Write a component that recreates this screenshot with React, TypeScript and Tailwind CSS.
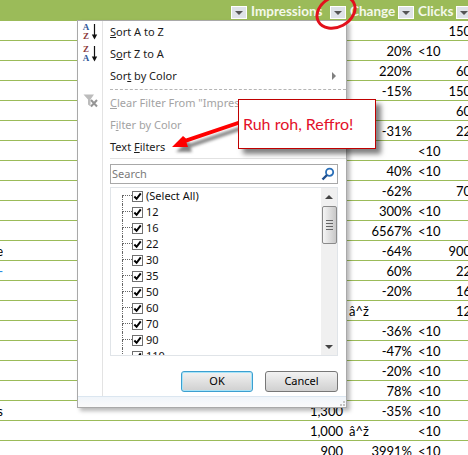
import type { ReactNode } from 'react'

const rows: { label?: string; imp?: string; change?: string; inf?: boolean; clicks?: string; low?: boolean }[] = [
  { clicks: '150' },
  { change: '20%', low: true },
  { change: '220%', clicks: '60' },
  { change: '-15%', clicks: '150' },
  { clicks: '60' },
  { change: '-31%', clicks: '22' },
  { low: true },
  { change: '40%', low: true },
  { change: '-62%', clicks: '70' },
  { change: '300%', low: true },
  { change: '6567%', low: true },
  { label: 'e', change: '-64%', clicks: '900' },
  { label: '-', change: '60%', clicks: '22' },
  { change: '-20%', clicks: '16' },
  { inf: true, clicks: '12' },
  { change: '-36%', low: true },
  { change: '-47%', low: true },
  { change: '-20%', low: true },
  { change: '78%', low: true },
  { label: 's', imp: '1,300', change: '-35%', low: true },
  { imp: '1,000', inf: true, low: true },
  { imp: '900', change: '3991%', low: true },
]

const values = ['(Select All)', '12', '16', '22', '30', '35', '50', '60', '70', '90', '110']

function HeaderButton() {
  return (
    <div className="mt-[4px] flex h-[13px] w-[16px] shrink-0 items-center justify-center border border-white bg-[#dfe3e8]">
      <div className="h-0 w-0 border-x-[4px] border-t-[4px] border-x-transparent border-t-[#555]" />
    </div>
  )
}

function HeaderCell({ width, children }: { width: string; children: ReactNode }) {
  return <div className={`${width} shrink-0 pt-[1px] pl-[4px] text-[13.5px] font-bold text-[#f4f8ea]`}>{children}</div>
}

function MenuItem({ children, disabled, icon }: { children: ReactNode; disabled?: boolean; icon?: ReactNode }) {
  return (
    <div className={`flex h-[22px] items-center justify-between pr-[10px] ${disabled ? 'text-[#a3a3a3]' : 'text-[#1c1c1c]'}`}>
      <span>{children}</span>
      {icon}
    </div>
  )
}

function SortIcon({ top, bottom, topColor, bottomColor }: { top: string; bottom: string; topColor: string; bottomColor: string }) {
  return (
    <div className="flex h-[22px] items-center justify-center gap-[1px]">
      <div className="flex w-[8px] flex-col items-center font-['Liberation_Serif',serif] text-[9px] leading-[9px] font-bold">
        <span className={topColor}>{top}</span>
        <span className={bottomColor}>{bottom}</span>
      </div>
      <svg width="7" height="16" viewBox="0 0 7 16">
        <path d="M3.5 0V12" stroke="#111" strokeWidth="1.2" />
        <path d="M0.8 10.5H6.2L3.5 15.5Z" fill="#111" />
      </svg>
    </div>
  )
}

function ListRow({ value, first }: { value: string; first?: boolean }) {
  return (
    <div className="flex h-[16px] shrink-0 items-center pl-[11px]">
      <div className="flex h-full w-[10px] shrink-0 flex-col">
        <div className={`h-1/2 border-b border-dotted border-[#666] ${first ? '' : 'border-l'}`} />
        <div className="h-1/2 border-l border-dotted border-[#666]" />
      </div>
      <div className="flex h-[11px] w-[11px] shrink-0 items-center justify-center border border-[#707070] bg-white">
        <svg width="9" height="9" viewBox="0 0 10 10">
          <path d="M1.5 5L4 7.6L8.6 1.6" fill="none" stroke="#000" strokeWidth="2.2" />
        </svg>
      </div>
      <span className="pl-[3px] text-[#111]">{value}</span>
    </div>
  )
}

export default function App() {
  return (
    <div className="relative h-[455px] w-[468px] overflow-hidden bg-white font-['Lato',sans-serif] text-[13px] text-black">
      <div className="flex h-[21px] w-[480px] items-center bg-[#9bbb59] pl-[231px]">
        <HeaderButton />
        <HeaderCell width="w-[83px]">Impressions</HeaderCell>
        <HeaderButton />
        <HeaderCell width="w-[52px]">Change</HeaderCell>
        <HeaderButton />
        <HeaderCell width="w-[42px]">Clicks</HeaderCell>
        <HeaderButton />
      </div>

      {rows.map((row, i) => (
        <div key={i} className="box-border flex h-[20px] w-[480px] items-center border-b border-[#9bbb59] pt-[2px] leading-none">
          <div className="flex w-[3px] shrink-0 justify-end overflow-hidden">
            <span className={row.label === '-' ? 'text-[#2b8be0]' : ''}>{row.label}</span>
          </div>
          <div className="w-[340px] shrink-0 text-right">{row.imp}</div>
          <div className={`ml-[6px] w-[63px] shrink-0 ${row.inf ? 'text-left' : 'text-right'}`}>
            {row.inf ? 'â^ž' : row.change}
          </div>
          <div className={`ml-[6px] w-[53px] shrink-0 ${row.low ? 'text-left' : 'text-right'}`}>
            {row.low ? '<10' : row.clicks}
          </div>
        </div>
      ))}

      {/* filter dropdown */}
      <div className="absolute top-[20px] left-[77px] flex h-[388px] w-[270px] flex-col border border-[#a9a9a9] bg-white font-['Noto_Sans',sans-serif] text-[11px] shadow-[3px_3px_4px_rgba(0,0,0,0.28)]">
        <div className="flex min-h-0 flex-1">
          <div className="w-[25px] shrink-0 border-r border-[#e3e3e3]">
            <SortIcon top="A" bottom="Z" topColor="text-[#2f5597]" bottomColor="text-[#8c3a3a]" />
            <SortIcon top="Z" bottom="A" topColor="text-[#8c3a3a]" bottomColor="text-[#2f5597]" />
            <div className="mt-[29px] flex justify-center">
              <svg width="15" height="14" viewBox="0 0 15 14">
                <path d="M0.5 0.5H11L7.5 5.5V12.5L5 10.5V5.5Z" fill="#bcbcbc" />
                <path d="M8 6L14 12.5M14 6L8 12.5" stroke="#959595" strokeWidth="2" />
              </svg>
            </div>
          </div>

          <div className="flex min-w-0 flex-1 flex-col pl-[7px]">
            <MenuItem>
              <u>S</u>ort A to Z
            </MenuItem>
            <MenuItem>
              S<u>o</u>rt Z to A
            </MenuItem>
            <MenuItem icon={<div className="h-0 w-0 border-y-[4px] border-l-[4px] border-y-transparent border-l-[#808080]" />}>
              Sor<u>t</u> by Color
            </MenuItem>
            <div className="my-[2px] h-0 border-t border-dashed border-[#b5b5b5]" />
            <MenuItem disabled>
              <u>C</u>lear Filter From "Impressions"
            </MenuItem>
            <MenuItem disabled>
              F<u>i</u>lter by Color
            </MenuItem>
            <MenuItem>
              Text <u>F</u>ilters
            </MenuItem>
            <div className="h-0 border-t border-[#e2e2e2]" />

            <div className="mt-[5px] mr-[8px] flex h-[20px] shrink-0 items-center justify-between border border-[#a8a8a8] pr-[2px] pl-[1px] text-[#7a7a7a]">
              <span>Search</span>
              <svg width="14" height="14" viewBox="0 0 14 14">
                <circle cx="8.6" cy="5.2" r="3.6" fill="#fff" stroke="#2a6fb8" strokeWidth="1.8" />
                <path d="M6 8L1.5 12.5" stroke="#1f4f8f" strokeWidth="2.4" />
              </svg>
            </div>

            <div className="mt-[3px] mr-[8px] flex h-[169px] shrink-0 overflow-hidden border border-[#e0e4e8]">
              <div className="min-w-0 flex-1">
                {values.map((v, i) => (
                  <ListRow key={v} value={v} first={i === 0} />
                ))}
              </div>
              <div className="flex w-[16px] shrink-0 flex-col items-center bg-[#f0f0f0]">
                <div className="mt-[7px] h-0 w-0 border-x-[4px] border-b-[4px] border-x-transparent border-b-[#444]" />
                <div className="mt-[7px] flex h-[38px] w-[15px] shrink-0 flex-col items-center justify-center gap-[2px] rounded-[2px] border border-[#8a8a8a] bg-gradient-to-r from-[#f5f5f5] to-[#c8c8c8]">
                  <div className="h-px w-[7px] bg-[#666]" />
                  <div className="h-px w-[7px] bg-[#666]" />
                  <div className="h-px w-[7px] bg-[#666]" />
                  <div className="h-px w-[7px] bg-[#666]" />
                </div>
                <div className="mt-auto mb-[6px] h-0 w-0 border-x-[4px] border-t-[4px] border-x-transparent border-t-[#444]" />
              </div>
            </div>

            <div className="mt-[15px] mr-[8px] flex justify-end gap-[12px]">
              <button className="h-[21px] w-[72px] rounded-[3px] border border-[#3c9fd0] bg-gradient-to-b from-[#f2f2f2] to-[#d0d0d0] shadow-[inset_0_0_0_1px_#a8e4f8]">
                OK
              </button>
              <button className="h-[21px] w-[73px] rounded-[3px] border border-[#777] bg-gradient-to-b from-[#f2f2f2] to-[#d0d0d0]">
                Cancel
              </button>
            </div>
          </div>
        </div>

        <div className="flex h-[11px] shrink-0 items-end justify-end border-t border-[#dbe6f0] bg-gradient-to-b from-[#f0f5fa] to-[#fafafa] pr-[1px] pb-[1px]">
          <div className="grid grid-cols-2 gap-[1px]">
            <div className="h-[2px] w-[2px]" />
            <div className="h-[2px] w-[2px] bg-[#c4c4c4]" />
            <div className="h-[2px] w-[2px] bg-[#c4c4c4]" />
            <div className="h-[2px] w-[2px] bg-[#c4c4c4]" />
          </div>
        </div>
      </div>

      {/* annotations on top of the screenshot */}
      <svg className="absolute top-0 left-0 h-[455px] w-[468px]" viewBox="0 0 468 455">
        <g opacity="0.6" transform="translate(4 5)" className="blur-[1.5px]">
          <path d="M238 121L186 138.5L183 136L172 147L188 147L186.5 142.5L238 125Z" fill="#333" />
        </g>
        <path d="M238 121L186 138.5L183 136L172 147L188 147L186.5 142.5L238 125Z" fill="#f00" />
        <ellipse cx="336" cy="12" rx="20" ry="15" transform="rotate(-28 336 12)" fill="none" stroke="#e3101c" strokeWidth="3" />
      </svg>

      <div className="absolute top-[99px] left-[238px] flex h-[50px] w-[138px] items-center border-[1.5px] border-[#c00000] bg-white pl-[4px] text-[16px] text-[#e3102a] shadow-[5px_5px_5px_rgba(0,0,0,0.5)]">
        Ruh roh, Reffro!
      </div>
    </div>
  )
}
